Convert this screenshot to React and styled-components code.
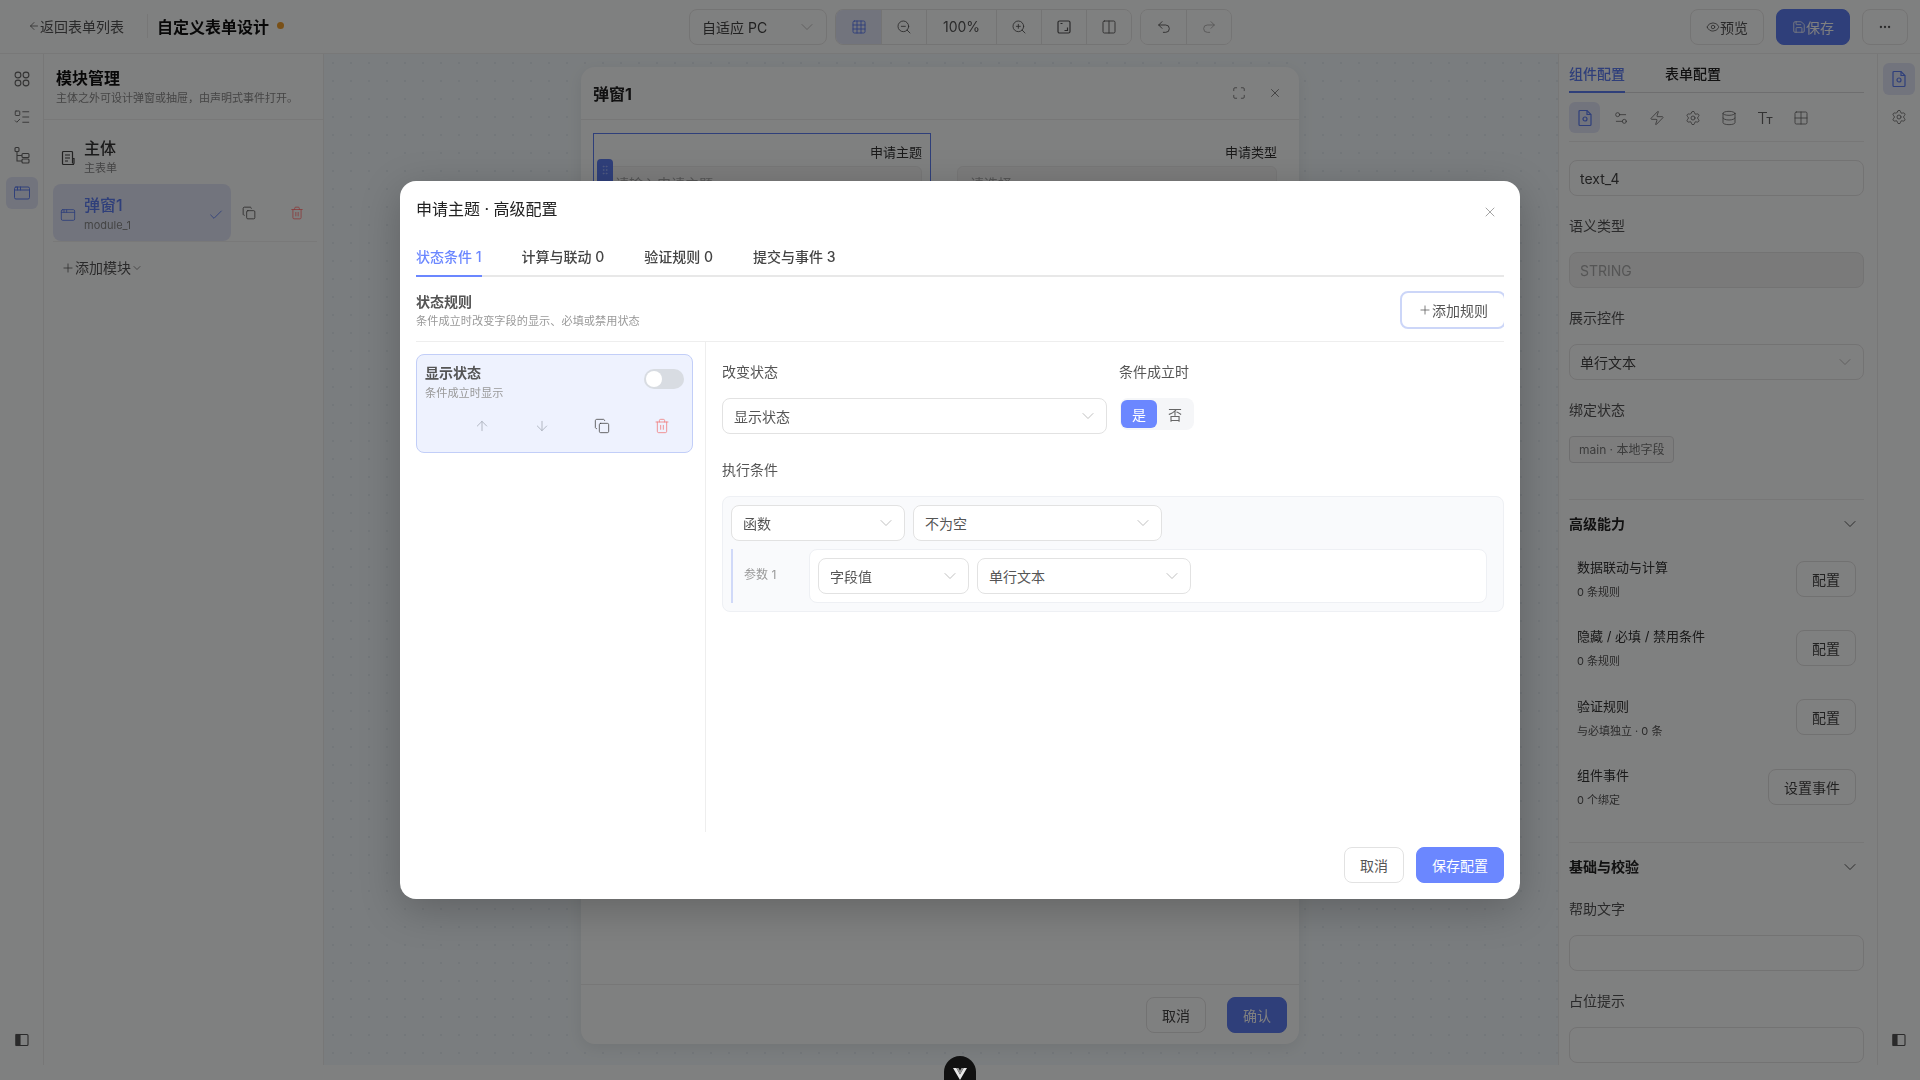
import styled, { createGlobalStyle } from "styled-components";
import {
  ArrowDown,
  ArrowLeft,
  ArrowUp,
  AppWindow,
  Check,
  ChevronDown,
  Columns2,
  Copy,
  Database,
  Ellipsis,
  Eye,
  Grid2x2,
  Grid3x3,
  GripVertical,
  ListTodo,
  Maximize,
  Plus,
  Redo2,
  Save,
  Settings,
  Settings2,
  Trash2,
  Undo2,
  X,
  Zap,
  ZoomIn,
  ZoomOut,
} from "lucide-react";

const GlobalStyle = createGlobalStyle`
  * { box-sizing: border-box; }
  html, body { margin: 0; padding: 0; background: #fff; }
  body {
    font-family: Inter, "Noto Sans CJK SC", sans-serif;
    color: #333;
    font-size: 14px;
  }
`;

const PRIMARY = "#6b87ff";
const BG_PRIMARY = "#6a7ec8";
const BG_TINT = "#e6e9f4";

// drawn icons the packages don't have
const Circles = () => (
  <svg width="18" height="18" viewBox="0 0 18 18" fill="none" stroke="currentColor" strokeWidth="1.1">
    <circle cx="5" cy="5" r="2.9" />
    <circle cx="13" cy="5" r="2.9" />
    <circle cx="5" cy="13" r="2.9" />
    <circle cx="13" cy="13" r="2.9" />
  </svg>
);

const TreeBlocks = () => (
  <svg width="18" height="18" viewBox="0 0 18 18" fill="none" stroke="currentColor" strokeWidth="1.1">
    <rect x="2" y="1.5" width="4" height="4" rx="1" />
    <path d="M4 5.5V15h5M4 9.5h5" />
    <rect x="9" y="7.5" width="7" height="4" rx="1" />
    <rect x="9" y="13" width="7" height="4" rx="1" />
  </svg>
);

const DocLines = () => (
  <svg width="16" height="16" viewBox="0 0 16 16" fill="none" stroke="currentColor" strokeWidth="1.2">
    <path d="M12.5 13.5V2.5a1 1 0 0 0-1-1h-8a1 1 0 0 0-1 1v11a1 1 0 0 0 1 1h10.5" />
    <path d="M12.5 8.5h1.5v4.5a1.5 1.5 0 0 1-1.5 1.5" />
    <path d="M5 5h5M5 8h5M5 11h3" />
  </svg>
);

const FileGear = () => (
  <svg width="16" height="18" viewBox="0 0 16 18" fill="none" stroke="currentColor" strokeWidth="1.2">
    <path d="M10 1.5H3a1 1 0 0 0-1 1v13a1 1 0 0 0 1 1h10a1 1 0 0 0 1-1V5.5z" />
    <path d="M10 1.5v4h4" />
    <circle cx="8" cy="10" r="2" />
  </svg>
);

const BoxCorner = () => (
  <svg width="16" height="16" viewBox="0 0 16 16" fill="none" stroke="currentColor" strokeWidth="1.2">
    <rect x="2" y="2" width="12" height="12" rx="1.5" />
    <path d="M8.5 11.5h3v-3" />
    <path d="M4.5 4.5h2" />
  </svg>
);

const TextSize = () => (
  <svg width="18" height="18" viewBox="0 0 18 18" fill="none" stroke="currentColor" strokeWidth="1.2">
    <path d="M2 3.5h9M6.5 3.5V15" />
    <path d="M10.5 8.5h6M13.5 8.5V15" />
  </svg>
);

const SideToggle = () => (
  <svg width="14" height="14" viewBox="0 0 14 14" fill="none" stroke="currentColor" strokeWidth="1.1">
    <rect x="1" y="1.5" width="12" height="11" rx="1" />
    <rect x="1" y="1.5" width="4" height="11" fill="currentColor" />
  </svg>
);

const VueMark = () => (
  <svg width="16" height="14" viewBox="0 0 16 14">
    <path d="M1 1h3.4L8 7.4 11.6 1H15L8 13z" fill="#e8e8e8" />
    <path d="M4.4 1h2.1L8 3.7 9.5 1h2.1L8 7.4z" fill="#9a9a9a" />
  </svg>
);

const Page = styled.div`
  width: 1920px;
  height: 1080px;
  display: flex;
  flex-direction: column;
  overflow: hidden;
  padding-bottom: 15px;
  background: #fff;
  position: relative;
`;

const TopBar = styled.header`
  height: 54px;
  flex: none;
  display: flex;
  align-items: center;
  padding: 0 12px 0 28px;
  border-bottom: 1px solid #f0f0f0;
`;

const TopLeft = styled.div`
  width: 661px;
  padding-bottom: 2px;
  display: flex;
  align-items: center;
`;

const BackLink = styled.a`
  display: flex;
  align-items: center;
  color: #555;
  font-size: 14px;
  padding-right: 23px;
  border-right: 1px solid #eee;
  height: 24px;
`;

const PageTitle = styled.h1`
  margin: 0 0 0 9px;
  font-size: 16px;
  font-weight: 700;
  color: #111;
`;

const Dot = styled.span`
  width: 7px;
  height: 7px;
  border-radius: 50%;
  margin-left: 8px;
  background: #d6a35c;
`;

const Tools = styled.div`
  display: flex;
  gap: 8px;
`;

const TopSelect = styled.div`
  width: 138px;
  height: 36px;
  display: flex;
  align-items: center;
  justify-content: space-between;
  padding: 0 9px 0 12px;
  border: 1px solid #e8e8e8;
  border-radius: 8px;
  color: #444;
`;

const ToolGroup = styled.div`
  display: flex;
  height: 36px;
  border: 1px solid #e8e8e8;
  border-radius: 8px;
  overflow: hidden;
`;

const ToolCell = styled.button`
  width: ${(p) => p.$w || 45}px;
  flex: none;
  display: flex;
  align-items: center;
  justify-content: center;
  border: none;
  padding: 0;
  font: inherit;
  font-size: 14px;
  color: ${(p) => (p.$on ? BG_PRIMARY : p.$dim ? "#aaa" : "#555")};
  background: ${(p) => (p.$on ? BG_TINT : "#fff")};
  & + & {
    border-left: 1px solid #e8e8e8;
  }
`;

const TopRight = styled.div`
  margin-left: auto;
  display: flex;
  gap: 12px;
`;

const TopButton = styled.button`
  width: ${(p) => p.$w}px;
  height: 36px;
  display: flex;
  align-items: center;
  justify-content: center;
  padding: 0;
  font: inherit;
  font-size: 14px;
  border-radius: 8px;
  border: 1px solid ${(p) => (p.$primary ? BG_PRIMARY : "#e8e8e8")};
  color: ${(p) => (p.$primary ? "#fff" : "#555")};
  background: ${(p) => (p.$primary ? BG_PRIMARY : "#fff")};
`;

const Body = styled.div`
  flex: 1;
  min-height: 0;
  display: flex;
`;

const Rail = styled.nav`
  width: ${(p) => p.$w}px;
  flex: none;
  display: flex;
  flex-direction: column;
  align-items: center;
  gap: 6px;
  padding-top: 9px;
  border-right: ${(p) => (p.$right ? "none" : "1px solid #eee")};
`;

const RailItem = styled.div`
  width: 32px;
  height: 32px;
  display: flex;
  align-items: center;
  justify-content: center;
  border-radius: 6px;
  color: ${(p) => (p.$on ? BG_PRIMARY : "#666")};
  background: ${(p) => (p.$on ? BG_TINT : "transparent")};
`;

const RailFoot = styled.div`
  margin-top: auto;
  margin-bottom: 9px;
  height: 32px;
  display: flex;
  align-items: center;
  color: #555;
`;

const ModulePanel = styled.aside`
  width: 280px;
  flex: none;
  border-right: 1px solid #eee;
`;

const ModuleHead = styled.div`
  padding: 12px 12px 12px;
  margin-bottom: 7px;
  border-bottom: 1px solid #f0f0f0;
  height: 66px;
`;

const ModuleTitle = styled.div`
  font-size: 16px;
  line-height: 24px;
  font-weight: 700;
  color: #111;
`;

const ModuleSub = styled.div`
  font-size: 11px;
  line-height: 18px;
  margin-top: -1px;
  color: #8a8a8a;
`;

const ModuleRow = styled.div`
  width: 264px;
  margin-left: 9px;
  display: flex;
  align-items: center;
  border-bottom: ${(p) => (p.$line ? "1px solid #f2f2f2" : "none")};
`;

const ModuleItem = styled.div`
  width: 178px;
  height: 57px;
  flex: none;
  display: flex;
  align-items: flex-start;
  gap: 8px;
  padding: 10px 7px 7px;
  border-radius: 8px;
  color: ${(p) => (p.$on ? BG_PRIMARY : "#444")};
  background: ${(p) => (p.$on ? BG_TINT : "transparent")};
`;

const ModuleIcon = styled.div`
  margin-top: 13px;
  display: flex;
`;

const ModuleText = styled.div`
  flex: 1;
  min-width: 0;
`;

const ModuleName = styled.div`
  font-size: 16px;
  line-height: 22px;
  font-weight: 500;
  color: ${(p) => (p.$on ? BG_PRIMARY : "#333")};
`;

const ModuleCode = styled.div`
  font-size: 11px;
  line-height: 18px;
  color: #888;
`;

const RowAction = styled.div`
  width: 36px;
  display: flex;
  justify-content: center;
  color: ${(p) => (p.$danger ? "#e27a7a" : "#444")};
  & + & {
    margin-left: 12px;
  }
`;

const AddModule = styled.div`
  margin: 15px 0 0 17px;
  line-height: 22px;
  display: flex;
  align-items: center;
  color: #555;
`;

const Canvas = styled.main`
  flex: 1;
  min-width: 0;
  display: flex;
  justify-content: center;
  padding: 13px 2px 21px 0;
  background-color: #f6fafc;
  background-image: radial-gradient(#e9edf1 1px, transparent 1px);
  background-size: 18px 18px;
`;

const CanvasModal = styled.section`
  width: 718px;
  height: 977px;
  display: flex;
  flex-direction: column;
  background: #fff;
  border-radius: 14px;
  box-shadow: 0 4px 16px rgba(0, 0, 0, 0.08);
`;

const CanvasHead = styled.div`
  height: 53px;
  flex: none;
  display: flex;
  align-items: center;
  padding: 0 17px 0 12px;
  gap: 22px;
  border-bottom: 1px solid #eee;
  color: #555;
`;

const CanvasTitle = styled.div`
  font-size: 16px;
  font-weight: 700;
  color: #222;
  margin-right: auto;
`;

const FormGrid = styled.div`
  flex: 1;
  display: grid;
  grid-template-columns: 338px 338px;
  align-items: start;
  column-gap: 17px;
  padding: 13px 12px 0;
`;

const FormField = styled.div`
  height: 100px;
  padding: 8px;
  text-align: right;
  position: relative;
  border: ${(p) => (p.$selected ? `1px solid ${BG_PRIMARY}` : "1px solid transparent")};
`;

const FieldName = styled.div`
  font-size: 13px;
  line-height: 20px;
  color: #333;
`;

const FormInput = styled.div`
  height: 36px;
  margin-top: 4px;
  padding-left: 12px;
  text-align: left;
  line-height: 34px;
  color: #aaa;
  background: #f8f8f8;
  border: 1px solid #eee;
  border-radius: 6px;
`;

const DragHandle = styled.span`
  position: absolute;
  left: 3px;
  top: 25px;
  width: 16px;
  height: 40px;
  display: flex;
  justify-content: center;
  padding-top: 5px;
  border-radius: 4px;
  color: #b9c4ee;
  background: ${BG_PRIMARY};
`;

const CanvasFoot = styled.div`
  height: 60px;
  flex: none;
  display: flex;
  align-items: center;
  justify-content: flex-end;
  gap: 21px;
  padding: 0 12px;
  border-top: 1px solid #eee;
`;

const CanvasButton = styled.button`
  width: 60px;
  height: 36px;
  padding: 0;
  font: inherit;
  border-radius: 8px;
  border: 1px solid ${(p) => (p.$primary ? BG_PRIMARY : "#e4e4e4")};
  color: ${(p) => (p.$primary ? "#fff" : "#444")};
  background: ${(p) => (p.$primary ? BG_PRIMARY : "#fff")};
`;

const ConfigPanel = styled.aside`
  width: 320px;
  flex: none;
  padding: 0 13px 0 10px;
  overflow: hidden;
  border-left: 1px solid #eee;
  border-right: 1px solid #eee;
`;

const PanelTabs = styled.div`
  height: 39px;
  display: flex;
  gap: 40px;
  padding-top: 9px;
  border-bottom: 1px solid #ddd;
`;

const PanelTab = styled.div`
  height: 30px;
  line-height: 22px;
  font-weight: 500;
  color: ${(p) => (p.$on ? BG_PRIMARY : "#222")};
  border-bottom: ${(p) => (p.$on ? `2px solid ${BG_PRIMARY}` : "none")};
`;

const IconRow = styled.div`
  margin-top: 9px;
  display: flex;
  gap: 5px;
  padding-bottom: 8px;
  border-bottom: 1px solid #eee;
`;

const IconCell = styled.div`
  width: 31px;
  height: 31px;
  display: flex;
  align-items: center;
  justify-content: center;
  border-radius: 6px;
  color: ${(p) => (p.$on ? BG_PRIMARY : "#666")};
  background: ${(p) => (p.$on ? BG_TINT : "transparent")};
`;

const PanelLabel = styled.div`
  margin-top: ${(p) => p.$mt || 19}px;
  margin-bottom: 15px;
  line-height: 22px;
  color: #555;
`;

const PanelInput = styled.div`
  height: 36px;
  margin-top: ${(p) => p.$mt || 0}px;
  display: flex;
  align-items: center;
  justify-content: space-between;
  padding: 0 8px 0 10px;
  border-radius: 8px;
  color: ${(p) => (p.$off ? "#aaa" : "#444")};
  background: ${(p) => (p.$off ? "#f3f3f3" : "#fff")};
  border: 1px solid #e6e6e6;
`;

const Tag = styled.span`
  display: inline-block;
  height: 27px;
  line-height: 25px;
  padding: 0 9px;
  font-size: 12px;
  color: #777;
  background: #fafafa;
  border: 1px solid #ddd;
  border-radius: 4px;
`;

const GroupHead = styled.div`
  margin-top: ${(p) => p.$mt}px;
  padding-top: 14px;
  display: flex;
  align-items: center;
  justify-content: space-between;
  padding-right: 4px;
  line-height: 20px;
  font-weight: 700;
  color: #222;
  border-top: 1px solid #eee;
`;

const AbilityList = styled.div`
  margin-top: 10px;
`;

const Ability = styled.div`
  height: 69.33px;
  display: flex;
  align-items: center;
  justify-content: space-between;
  padding: 0 8px;
`;

const AbilityName = styled.div`
  font-size: 13px;
  line-height: 20px;
  color: #333;
`;

const AbilityNote = styled.div`
  margin-top: 7px;
  font-size: 11px;
  line-height: 16px;
  color: #555;
`;

const SmallButton = styled.button`
  height: 36px;
  padding: 0 15px;
  font: inherit;
  font-size: 14px;
  color: #444;
  background: #fff;
  border: 1px solid #e2e2e2;
  border-radius: 8px;
`;

const Backdrop = styled.div`
  position: absolute;
  inset: 0;
  display: flex;
  align-items: center;
  justify-content: center;
  backdrop-filter: blur(0.5px) brightness(0.5) saturate(1.6);
`;

const Dialog = styled.div`
  width: 1120px;
  height: 718px;
  display: flex;
  flex-direction: column;
  padding: 16px;
  background: #fff;
  border-radius: 16px;
  box-shadow: 0 10px 40px rgba(0, 0, 0, 0.22);
`;

const DialogHead = styled.div`
  height: 24px;
  flex: none;
  margin-top: -1px;
  display: flex;
  align-items: center;
  justify-content: space-between;
`;

const DialogTitle = styled.div`
  font-size: 16px;
  font-weight: 400;
  color: #222;
`;

const CloseBtn = styled.span`
  display: flex;
  margin: 8px 6px 0 0;
  color: #777;
`;

const TabBar = styled.div`
  flex: none;
  margin-top: 21px;
  display: flex;
  gap: 40px;
  border-bottom: 2px solid #e8e8e8;
`;

const Tab = styled.div`
  height: 36px;
  margin-bottom: -2px;
  line-height: 32px;
  font-size: 14px;
  font-weight: 500;
  color: ${(p) => (p.$on ? PRIMARY : "#444")};
  border-bottom: 2px solid ${(p) => (p.$on ? PRIMARY : "transparent")};
`;

const RuleHead = styled.div`
  flex: none;
  display: flex;
  align-items: flex-start;
  justify-content: space-between;
  padding: 15px 0 11px;
  border-bottom: 1px solid #eee;
`;

const RuleTitle = styled.div`
  line-height: 20px;
  font-weight: 700;
  color: #555;
`;

const RuleNote = styled.div`
  font-size: 11.2px;
  line-height: 18px;
  color: #999;
`;

const AddRule = styled.button`
  width: 106px;
  height: 38px;
  margin: -1px -2px 1px 0;
  display: flex;
  align-items: center;
  justify-content: center;
  padding: 0;
  font: inherit;
  font-size: 14px;
  color: #555;
  background: #fff;
  border: 2px solid #ccd6f8;
  border-radius: 8px;
  clip-path: inset(0 2px 0 0);
`;

const RuleBody = styled.div`
  flex: none;
  height: 490px;
  display: grid;
  grid-template-columns: 290px 1fr;
`;

const RuleList = styled.div`
  padding-top: 12px;
  border-right: 1px solid #eee;
`;

const RuleCard = styled.div`
  width: 277px;
  height: 99px;
  padding: 8px;
  background: #eef2fe;
  border: 1px solid #c2cef8;
  border-radius: 8px;
`;

const CardTop = styled.div`
  display: flex;
  justify-content: space-between;
`;

const CardTitle = styled.div`
  line-height: 20px;
  font-weight: 700;
  color: #555;
`;

const CardNote = styled.div`
  margin-top: 1px;
  font-size: 11.2px;
  line-height: 18px;
  color: #999;
`;

const Switch = styled.span`
  width: 40px;
  height: 20px;
  margin-top: 6px;
  padding: 2px;
  display: block;
  border-radius: 10px;
  background: #d8dce2;
  &::before {
    content: "";
    display: block;
    width: 16px;
    height: 16px;
    border-radius: 50%;
    background: #fff;
  }
`;

const CardActions = styled.div`
  margin-top: 16px;
  display: flex;
  justify-content: flex-end;
  gap: 44px;
  padding-right: 14px;
`;

const CardAction = styled.span`
  display: flex;
  color: ${(p) => (p.$danger ? "#f07b7b" : p.$dim ? "#a3a9b5" : "#444")};
`;

const RuleEditor = styled.div`
  padding: 20px 0 0 16px;
`;

const EditorRow = styled.div`
  display: flex;
  gap: 12px;
`;

const EditorField = styled.div`
  width: ${(p) => p.$w}px;
`;

const EditorLabel = styled.div`
  margin-top: ${(p) => p.$mt || 0}px;
  margin-bottom: 16px;
  line-height: 20px;
  color: #555;
`;

const Picker = styled.div`
  width: ${(p) => (p.$w ? `${p.$w}px` : "100%")};
  height: 36px;
  flex: none;
  display: flex;
  align-items: center;
  justify-content: space-between;
  padding: 0 8px 1px 11px;
  color: #555;
  background: #fff;
  border: 1px solid #e2e2e2;
  border-radius: 8px;
`;

const PickerArrow = styled(ChevronDown)`
  color: #aaa;
`;

const YesNo = styled.div`
  width: 74px;
  height: 32px;
  margin-left: 1px;
  padding: 2px 1px;
  display: flex;
  background: #f5f6f8;
  border-radius: 8px;
`;

const YesNoItem = styled.span`
  width: 36px;
  display: flex;
  align-items: center;
  justify-content: center;
  border-radius: 6px;
  color: ${(p) => (p.$on ? "#fff" : "#666")};
  background: ${(p) => (p.$on ? PRIMARY : "transparent")};
`;

const CondBox = styled.div`
  padding: 8px;
  background: #f9fafc;
  border: 1px solid #eef0f4;
  border-radius: 8px;
`;

const CondRow = styled.div`
  display: flex;
  gap: 8px;
`;

const ArgRow = styled.div`
  margin-top: 8px;
  padding-left: 11px;
  height: 54px;
  display: flex;
  align-items: center;
  border-left: 2px solid #d0d9f8;
`;

const ArgName = styled.div`
  width: 65px;
  flex: none;
  font-size: 12px;
  color: #999;
  margin-bottom: 6px;
`;

const ArgBox = styled.div`
  width: 678px;
  padding: 8px;
  display: flex;
  gap: 8px;
  background: #fff;
  border: 1px solid #eef0f4;
  border-radius: 8px;
`;

const DialogFoot = styled.div`
  margin-top: auto;
  flex: none;
  display: flex;
  justify-content: flex-end;
  gap: 12px;
`;

const FootButton = styled.button`
  width: ${(p) => p.$w}px;
  height: 36px;
  padding: 0;
  font: inherit;
  font-size: 14px;
  color: ${(p) => (p.$primary ? "#fff" : "#555")};
  background: ${(p) => (p.$primary ? PRIMARY : "#fff")};
  border: 1px solid ${(p) => (p.$primary ? PRIMARY : "#e2e2e2")};
  border-radius: 8px;
`;

const VueBadge = styled.div`
  position: absolute;
  left: 944px;
  top: 1056px;
  width: 32px;
  height: 40px;
  padding-top: 11px;
  display: flex;
  justify-content: center;
  background: #111;
  border-radius: 16px;
`;

const abilities = [
  { name: "数据联动与计算", note: "0 条规则", action: "配置" },
  { name: "隐藏 / 必填 / 禁用条件", note: "0 条规则", action: "配置" },
  { name: "验证规则", note: "与必填独立 · 0 条", action: "配置" },
  { name: "组件事件", note: "0 个绑定", action: "设置事件" },
];

const tabs = ["状态条件 1", "计算与联动 0", "验证规则 0", "提交与事件 3"];

const Arrow = () => <PickerArrow size={20} strokeWidth={0.9} />;

export default function App() {
  return (
    <>
      <GlobalStyle />
      <Page>
        <TopBar>
          <TopLeft>
            <BackLink>
              <ArrowLeft size={12} strokeWidth={1.5} />
              返回表单列表
            </BackLink>
            <PageTitle>自定义表单设计</PageTitle>
            <Dot />
          </TopLeft>
          <Tools>
            <TopSelect>
              自适应 PC
              <Arrow />
            </TopSelect>
            <ToolGroup>
              <ToolCell $on>
                <Grid3x3 size={16} strokeWidth={1.4} />
              </ToolCell>
              <ToolCell>
                <ZoomOut size={16} strokeWidth={1.3} />
              </ToolCell>
              <ToolCell $w={70}>100%</ToolCell>
              <ToolCell>
                <ZoomIn size={16} strokeWidth={1.3} />
              </ToolCell>
              <ToolCell>
                <BoxCorner />
              </ToolCell>
              <ToolCell>
                <Columns2 size={16} strokeWidth={1.3} />
              </ToolCell>
            </ToolGroup>
            <ToolGroup>
              <ToolCell>
                <Undo2 size={16} strokeWidth={1.3} />
              </ToolCell>
              <ToolCell $dim>
                <Redo2 size={16} strokeWidth={1.3} />
              </ToolCell>
            </ToolGroup>
          </Tools>
          <TopRight>
            <TopButton $w={74}>
              <Eye size={14} strokeWidth={1.4} />
              预览
            </TopButton>
            <TopButton $w={74} $primary>
              <Save size={14} strokeWidth={1.4} />
              保存
            </TopButton>
            <TopButton $w={46}>
              <Ellipsis size={14} />
            </TopButton>
          </TopRight>
        </TopBar>

        <Body>
          <Rail $w={44}>
            <RailItem>
              <Circles />
            </RailItem>
            <RailItem>
              <ListTodo size={18} strokeWidth={1.2} />
            </RailItem>
            <RailItem>
              <TreeBlocks />
            </RailItem>
            <RailItem $on>
              <AppWindow size={18} strokeWidth={1.3} />
            </RailItem>
            <RailFoot>
              <SideToggle />
            </RailFoot>
          </Rail>

          <ModulePanel>
            <ModuleHead>
              <ModuleTitle>模块管理</ModuleTitle>
              <ModuleSub>主体之外可设计弹窗或抽屉，由声明式事件打开。</ModuleSub>
            </ModuleHead>
            <ModuleRow>
              <ModuleItem>
                <ModuleIcon>
                  <DocLines />
                </ModuleIcon>
                <ModuleText>
                  <ModuleName>主体</ModuleName>
                  <ModuleCode>主表单</ModuleCode>
                </ModuleText>
              </ModuleItem>
            </ModuleRow>
            <ModuleRow $line>
              <ModuleItem $on>
                <ModuleIcon>
                  <AppWindow size={16} strokeWidth={1.3} />
                </ModuleIcon>
                <ModuleText>
                  <ModuleName $on>弹窗1</ModuleName>
                  <ModuleCode>module_1</ModuleCode>
                </ModuleText>
                <ModuleIcon>
                  <Check size={16} strokeWidth={1.3} />
                </ModuleIcon>
              </ModuleItem>
              <RowAction>
                <Copy size={14} strokeWidth={1.3} />
              </RowAction>
              <RowAction $danger>
                <Trash2 size={14} strokeWidth={1.3} />
              </RowAction>
            </ModuleRow>
            <AddModule>
              <Plus size={14} strokeWidth={1.3} />
              添加模块
              <ChevronDown size={12} strokeWidth={1.3} />
            </AddModule>
          </ModulePanel>

          <Canvas>
            <CanvasModal>
              <CanvasHead>
                <CanvasTitle>弹窗1</CanvasTitle>
                <Maximize size={14} strokeWidth={1.2} />
                <X size={14} strokeWidth={1.2} />
              </CanvasHead>
              <FormGrid>
                <FormField $selected>
                  <DragHandle>
                    <GripVertical size={12} strokeWidth={1.2} />
                  </DragHandle>
                  <FieldName>申请主题</FieldName>
                  <FormInput>请输入申请主题</FormInput>
                </FormField>
                <FormField>
                  <FieldName>申请类型</FieldName>
                  <FormInput>请选择</FormInput>
                </FormField>
              </FormGrid>
              <CanvasFoot>
                <CanvasButton>取消</CanvasButton>
                <CanvasButton $primary>确认</CanvasButton>
              </CanvasFoot>
            </CanvasModal>
          </Canvas>

          <ConfigPanel>
            <PanelTabs>
              <PanelTab $on>组件配置</PanelTab>
              <PanelTab>表单配置</PanelTab>
            </PanelTabs>
            <IconRow>
              <IconCell $on>
                <FileGear />
              </IconCell>
              <IconCell>
                <Settings2 size={16} strokeWidth={1.2} />
              </IconCell>
              <IconCell>
                <Zap size={16} strokeWidth={1.2} />
              </IconCell>
              <IconCell>
                <Settings size={16} strokeWidth={1.2} />
              </IconCell>
              <IconCell>
                <Database size={16} strokeWidth={1.2} />
              </IconCell>
              <IconCell>
                <TextSize />
              </IconCell>
              <IconCell>
                <Grid2x2 size={16} strokeWidth={1.2} />
              </IconCell>
            </IconRow>
            <PanelInput $mt={18}>text_4</PanelInput>
            <PanelLabel>语义类型</PanelLabel>
            <PanelInput $off>STRING</PanelInput>
            <PanelLabel>展示控件</PanelLabel>
            <PanelInput>
              单行文本
              <Arrow />
            </PanelInput>
            <PanelLabel>绑定状态</PanelLabel>
            <Tag>main · 本地字段</Tag>
            <GroupHead $mt={36}>
              高级能力
              <ChevronDown size={20} strokeWidth={0.9} />
            </GroupHead>
            <AbilityList>
              {abilities.map((item) => (
                <Ability key={item.name}>
                  <div>
                    <AbilityName>{item.name}</AbilityName>
                    <AbilityNote>{item.note}</AbilityNote>
                  </div>
                  <SmallButton>{item.action}</SmallButton>
                </Ability>
              ))}
            </AbilityList>
            <GroupHead $mt={21}>
              基础与校验
              <ChevronDown size={20} strokeWidth={0.9} />
            </GroupHead>
            <PanelLabel $mt={21}>帮助文字</PanelLabel>
            <PanelInput />
            <PanelLabel>占位提示</PanelLabel>
            <PanelInput />
          </ConfigPanel>

          <Rail $w={42} $right>
            <RailItem $on>
              <FileGear />
            </RailItem>
            <RailItem>
              <Settings size={16} strokeWidth={1.2} />
            </RailItem>
            <RailFoot>
              <SideToggle />
            </RailFoot>
          </Rail>
        </Body>

        <Backdrop>
          <Dialog>
            <DialogHead>
              <DialogTitle>申请主题 · 高级配置</DialogTitle>
              <CloseBtn>
                <X size={16} strokeWidth={1} />
              </CloseBtn>
            </DialogHead>
            <TabBar>
              {tabs.map((t, i) => (
                <Tab key={t} $on={i === 0}>
                  {t}
                </Tab>
              ))}
            </TabBar>
            <RuleHead>
              <div>
                <RuleTitle>状态规则</RuleTitle>
                <RuleNote>条件成立时改变字段的显示、必填或禁用状态</RuleNote>
              </div>
              <AddRule>
                <Plus size={14} strokeWidth={1.3} />
                添加规则
              </AddRule>
            </RuleHead>
            <RuleBody>
              <RuleList>
                <RuleCard>
                  <CardTop>
                    <div>
                      <CardTitle>显示状态</CardTitle>
                      <CardNote>条件成立时显示</CardNote>
                    </div>
                    <Switch />
                  </CardTop>
                  <CardActions>
                    <CardAction $dim>
                      <ArrowUp size={16} strokeWidth={1.2} />
                    </CardAction>
                    <CardAction $dim>
                      <ArrowDown size={16} strokeWidth={1.2} />
                    </CardAction>
                    <CardAction>
                      <Copy size={16} strokeWidth={1.2} />
                    </CardAction>
                    <CardAction $danger>
                      <Trash2 size={16} strokeWidth={1.2} />
                    </CardAction>
                  </CardActions>
                </RuleCard>
              </RuleList>
              <RuleEditor>
                <EditorRow>
                  <EditorField $w={385}>
                    <EditorLabel>改变状态</EditorLabel>
                    <Picker>
                      显示状态
                      <Arrow />
                    </Picker>
                  </EditorField>
                  <EditorField $w={120}>
                    <EditorLabel>条件成立时</EditorLabel>
                    <YesNo>
                      <YesNoItem $on>是</YesNoItem>
                      <YesNoItem>否</YesNoItem>
                    </YesNo>
                  </EditorField>
                </EditorRow>
                <EditorLabel $mt={26}>执行条件</EditorLabel>
                <CondBox>
                  <CondRow>
                    <Picker $w={174}>
                      函数
                      <Arrow />
                    </Picker>
                    <Picker $w={249}>
                      不为空
                      <Arrow />
                    </Picker>
                  </CondRow>
                  <ArgRow>
                    <ArgName>参数 1</ArgName>
                    <ArgBox>
                      <Picker $w={151}>
                        字段值
                        <Arrow />
                      </Picker>
                      <Picker $w={214}>
                        单行文本
                        <Arrow />
                      </Picker>
                    </ArgBox>
                  </ArgRow>
                </CondBox>
              </RuleEditor>
            </RuleBody>
            <DialogFoot>
              <FootButton $w={60}>取消</FootButton>
              <FootButton $w={88} $primary>
                保存配置
              </FootButton>
            </DialogFoot>
          </Dialog>
        </Backdrop>

        <VueBadge>
          <VueMark />
        </VueBadge>
      </Page>
    </>
  );
}
